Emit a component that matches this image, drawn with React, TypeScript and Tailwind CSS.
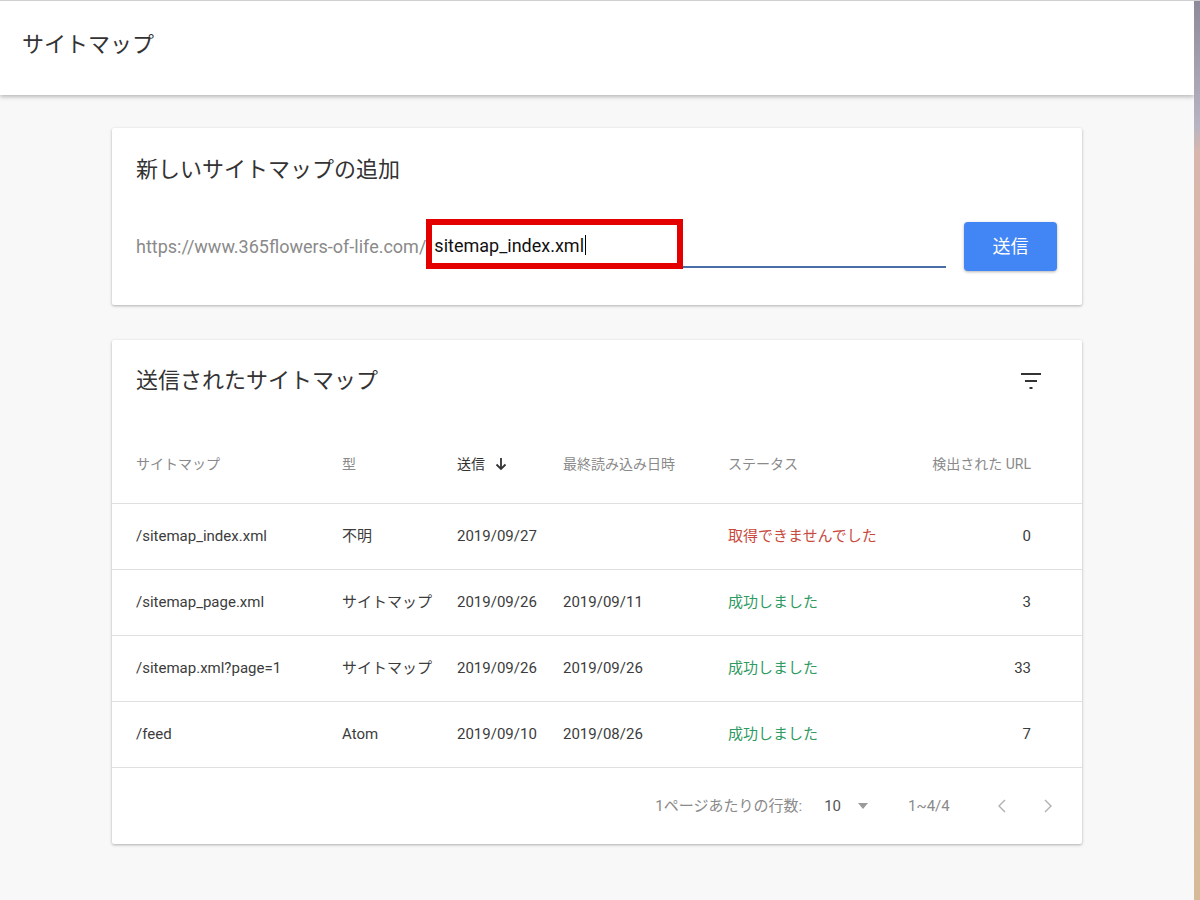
import React from "react";

const rows = [
  { path: "/sitemap_index.xml", type: "不明", sent: "2019/09/27", read: "", status: "取得できませんでした", ok: false, urls: "0" },
  { path: "/sitemap_page.xml", type: "サイトマップ", sent: "2019/09/26", read: "2019/09/11", status: "成功しました", ok: true, urls: "3" },
  { path: "/sitemap.xml?page=1", type: "サイトマップ", sent: "2019/09/26", read: "2019/09/26", status: "成功しました", ok: true, urls: "33" },
  { path: "/feed", type: "Atom", sent: "2019/09/10", read: "2019/08/26", status: "成功しました", ok: true, urls: "7" },
];

const GRID = "grid grid-cols-[206px_115px_106px_165px_1fr_auto] items-center pl-[24px] pr-[51px]";

function FilterIcon() {
  return (
    <svg width="20" height="18" viewBox="0 0 20 18" aria-hidden>
      <rect x="0" y="1" width="20" height="2" fill="#333" />
      <rect x="4" y="8" width="12" height="2" fill="#333" />
      <rect x="8.5" y="15" width="3" height="2" fill="#333" />
    </svg>
  );
}

function ArrowDown() {
  return (
    <svg width="12" height="14" viewBox="0 0 12 14" aria-hidden>
      <path d="M6 1v11M1.5 7.5 6 12l4.5-4.5" fill="none" stroke="#333" strokeWidth="1.8" />
    </svg>
  );
}

function Chevron({ dir }: { dir: "left" | "right" }) {
  return (
    <svg width="10" height="16" viewBox="0 0 10 16" aria-hidden>
      <path
        d={dir === "left" ? "M8 2 2 8l6 6" : "M2 2l6 6-6 6"}
        fill="none"
        stroke="#b0b0b0"
        strokeWidth="1.4"
      />
    </svg>
  );
}

export default function App() {
  return (
    <div className="flex h-[900px] w-[1200px] overflow-hidden border-t border-[#d0d0d0] bg-[#f8f8f8] font-['Roboto','Noto_Sans_CJK_JP',sans-serif]">
      <div className="flex flex-1 flex-col">
        <header className="flex h-[94px] shrink-0 items-center bg-white pb-[6px] pl-[22px] shadow-[0_2px_4px_rgba(0,0,0,0.25)]">
          <h1 className="text-[22px] leading-8 text-[#333]">サイトマップ</h1>
        </header>

        <main className="mx-auto flex w-[970px] flex-col gap-[35px] pt-[33px]">
          <section className="rounded-[2px] bg-white px-[25px] pb-[34px] pl-[24px] pt-[26px] shadow-[0_1px_3px_rgba(0,0,0,0.3)]">
            <h2 className="text-[22px] leading-8 text-[#333]">新しいサイトマップの追加</h2>
            <div className="mt-[35px] flex h-[50px] items-center">
              <span className="text-[18px] text-[#8a8a8a]">https://www.365flowers-of-life.com/</span>
              <div className="relative mr-[18px] flex h-[44px] flex-1 items-center border-b-2 border-[#4a6da7] pl-[8px]">
                <span className="text-[18px] text-[#111]">sitemap_index.xml</span>
                <span className="ml-[1px] h-[20px] w-[1px] bg-black" />
                <div className="absolute left-0 top-[-5px] h-[50px] w-[257px] border-[6px] border-[#e50000]" />
              </div>
              <button
                type="button"
                className="h-[49px] w-[93px] rounded-[4px] bg-[#4285f4] text-[18px] text-white shadow-[0_1px_3px_rgba(0,0,0,0.3)]"
              >
                送信
              </button>
            </div>
          </section>

          <section className="rounded-[2px] bg-white shadow-[0_1px_3px_rgba(0,0,0,0.3)]">
            <div className="flex items-center justify-between pl-[24px] pr-[41px] pt-[25px]">
              <h2 className="text-[22px] leading-8 text-[#333]">送信されたサイトマップ</h2>
              <FilterIcon />
            </div>
            <div className={`${GRID} pb-[28px] pt-[56px] text-[14px] leading-[22px] text-[#8a8a8a]`}>
              <span>サイトマップ</span>
              <span>型</span>
              <span className="flex items-center gap-[10px] text-[#333]">
                送信 <ArrowDown />
              </span>
              <span>最終読み込み日時</span>
              <span>ステータス</span>
              <span className="text-right">検出された URL</span>
            </div>
            {rows.map((r) => (
              <div
                key={r.path}
                className={`${GRID} h-[66px] border-t border-[#e0e0e0] text-[15px] text-[#3c3c3c]`}
              >
                <span>{r.path}</span>
                <span>{r.type}</span>
                <span>{r.sent}</span>
                <span>{r.read}</span>
                <span className={r.ok ? "text-[#2f9a62]" : "text-[#c8493d]"}>{r.status}</span>
                <span className="text-right">{r.urls}</span>
              </div>
            ))}
            <div className="flex h-[77px] items-center justify-end border-t border-[#e0e0e0] pr-[29px] text-[15px] text-[#8a8a8a]">
              <span>1ページあたりの行数:</span>
              <span className="ml-[22px] text-[#555]">10</span>
              <span className="ml-[17px] h-0 w-0 border-x-[5px] border-t-[6px] border-x-transparent border-t-[#9a9a9a]" />
              <span className="ml-[40px] min-w-[46px]">1~4/4</span>
              <span className="ml-[43px] flex">
                <Chevron dir="left" />
              </span>
              <span className="ml-[36px] flex">
                <Chevron dir="right" />
              </span>
            </div>
          </section>
        </main>
      </div>
      <div className="w-[6px] shrink-0 bg-[linear-gradient(180deg,#8f8a9a_0%,#b8b4c2_14%,#d9b6ab_17%,#dcb4a8_70%,#d6bb98_100%)]" />
    </div>
  );
}
